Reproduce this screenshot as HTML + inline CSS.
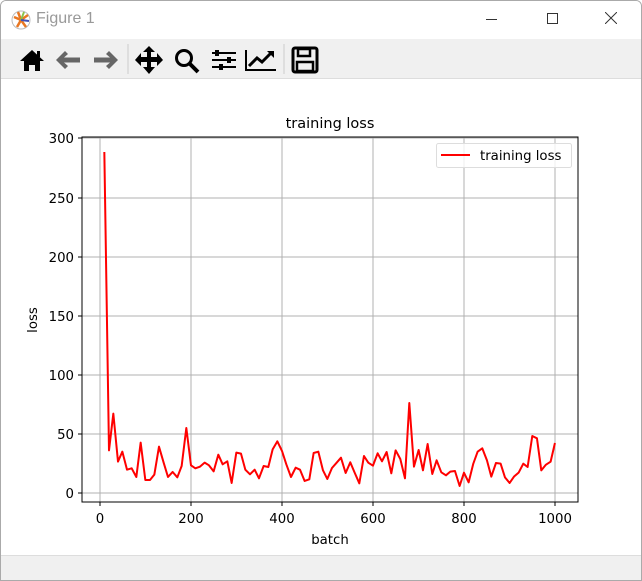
<!DOCTYPE html>
<html><head><style>
body{margin:0;width:642px;height:581px;overflow:hidden;background:#fff;font-family:"DejaVu Sans","Liberation Sans",sans-serif;}
.win{position:absolute;left:0;top:0;width:640px;height:579px;border:1px solid #aaa;border-radius:6px 6px 0 0;overflow:hidden;background:#fff}
.title{position:absolute;left:0;top:0;width:640px;height:38px;background:#fff}
.tb{position:absolute;left:0;top:38px;width:640px;height:39px;background:#f0f0f0;border-bottom:1px solid #ddd}
.status{position:absolute;left:0;top:554px;width:640px;height:25px;background:#f0f0f0;border-top:1px solid #ddd}
</style></head><body>
<div class="win">
<div class="title">
<svg width="30" height="30" style="position:absolute;left:8px;top:6px" viewBox="0 0 30 30"><circle cx="12" cy="13" r="9" fill="#fff" stroke="#bbb"/><path d="M12 13L5 10M12 13L9 5M12 13L19 8M12 13L17 20M12 13L8 20" stroke="#e87722" stroke-width="2.5"/><path d="M12 13L15 5" stroke="#8bc34a" stroke-width="2"/><path d="M12 13L20 14" stroke="#3f51b5" stroke-width="2"/></svg>
<div style="position:absolute;left:35px;top:9px;font-family:'Liberation Sans',sans-serif;font-size:16px;color:#999">Figure 1</div>
<div style="position:absolute;left:485px;top:18px;width:11px;height:1px;background:#333"></div>
<div style="position:absolute;left:546px;top:12px;width:9px;height:9px;border:1px solid #333"></div>
<svg style="position:absolute;left:604px;top:11px" width="12" height="12"><path d="M0 0L12 12M12 0L0 12" stroke="#333"/></svg>
</div>
<div class="tb">
<svg width="330" height="39" viewBox="0 0 330 39">
<path d="M19 22L31 11L43 22H39V32H34V26H28V32H23V22Z" fill="#000"/><rect x="36" y="12" width="3" height="6" fill="#000"/>
<path d="M55 21L64 12L67 15L63 18.5H79V23.5H63L67 27L64 30Z" fill="#666"/>
<path d="M117 21L108 12L105 15L109 18.5H93V23.5H109L105 27L108 30Z" fill="#666"/>
<path d="M148 7L142 13H146V18H140V14L134 21L140 27V23H146V28H142L148 35L154 28H150V23H156V27L162 21L156 14V18H150V13H154Z" fill="#000"/>
<circle cx="183" cy="19" r="7.5" fill="none" stroke="#000" stroke-width="3"/><path d="M188 24L197 33" stroke="#000" stroke-width="4"/>
<path d="M211 14H235M211 21H235M211 28H235" stroke="#000" stroke-width="2"/><rect x="214" y="11" width="4" height="6"/><rect x="226" y="18" width="4" height="6"/><rect x="218" y="25" width="4" height="6"/>
<path d="M245 11V31H275" stroke="#000" stroke-width="2" fill="none"/><path d="M248 27L256 19L261 23L271 13" stroke="#000" stroke-width="3" fill="none"/><path d="M266 12H273V19Z"/>
<rect x="292" y="9" width="24" height="24" rx="2" fill="none" stroke="#000" stroke-width="3"/><rect x="297" y="10" width="12" height="7" fill="none" stroke="#000" stroke-width="2.5"/><rect x="296" y="23" width="16" height="9" fill="none" stroke="#000" stroke-width="2.5"/>
<path d="M127 5V35M283 5V35" stroke="#ccc"/>
</svg>
</div>
<svg style="position:absolute;left:0;top:0" width="642" height="581" font-size="13.3" font-family="DejaVu Sans, sans-serif">
<g stroke="#b0b0b0" stroke-width="1">
<path d="M99 136V501M190 136V501M281 136V501M372 136V501M463 136V501M554 136V501"/>
<path d="M81 492H577M81 433H577M81 374H577M81 315H577M81 256H577M81 197H577M81 137H577"/>
</g>
<g transform="translate(80,380) scale(0.3333)" fill="none" stroke="#f00" stroke-width="6" stroke-linejoin="round">
<polyline points="70,-687 84,208 97,98 111,242 124,212 138,266 152,262 166,288 179,185 193,297 207,297 220,281 234,197 248,245 261,288 275,273 289,289 302,255 316,141 330,253 343,262 357,257 371,245 384,253 398,271 412,221 425,250 439,241 452,306 466,215 480,218 493,266 507,280 521,266 534,292 548,255 562,258 575,205 589,181 603,210 616,250 630,288 644,260 657,266 671,300 685,295 698,216 712,212 726,268 739,294 753,261 767,245 780,230 794,276 808,244 821,275 835,307 849,225 862,245 876,254 890,217 903,241 917,213 931,277 944,208 958,234 972,292 985,66 999,257 1013,207 1026,268 1040,189 1054,279 1067,238 1081,274 1095,283 1108,272 1122,270 1136,315 1149,275 1163,304 1177,248 1190,212 1204,202 1218,238 1231,287 1245,246 1259,248 1272,289 1286,306 1299,287 1313,275 1327,248 1340,258 1354,165 1368,172 1381,268 1395,251 1409,242 1422,186"/>
</g>
<rect x="81" y="136" width="496" height="365" fill="none" stroke="#000" stroke-width="1"/>
<g stroke="#000"><path d="M99 501v4M190 501v4M281 501v4M372 501v4M463 501v4M554 501v4M81 492h-4M81 433h-4M81 374h-4M81 315h-4M81 256h-4M81 197h-4M81 137h-4"/></g>
<g text-anchor="middle" fill="#000">
<text x="99" y="522">0</text><text x="190" y="522">200</text><text x="281" y="522">400</text><text x="372" y="522">600</text><text x="463" y="522">800</text><text x="554" y="522">1000</text>
<text x="329" y="543">batch</text><text x="329" y="127" font-size="14.5">training loss</text>
</g>
<g text-anchor="end"><text x="73" y="497">0</text><text x="73" y="438">50</text><text x="73" y="379">100</text><text x="73" y="320">150</text><text x="73" y="261">200</text><text x="73" y="202">250</text><text x="73" y="142">300</text></g>
<text transform="translate(36,319) rotate(-90)" text-anchor="middle">loss</text>
<rect x="435.5" y="142.5" width="135" height="24" rx="2" fill="#fff" fill-opacity="0.8" stroke="#ddd"/>
<path d="M440 154H469" stroke="#f00" stroke-width="2"/>
<text x="479" y="159">training loss</text>
</svg>
<div class="status"></div>
</div>
</body></html>
